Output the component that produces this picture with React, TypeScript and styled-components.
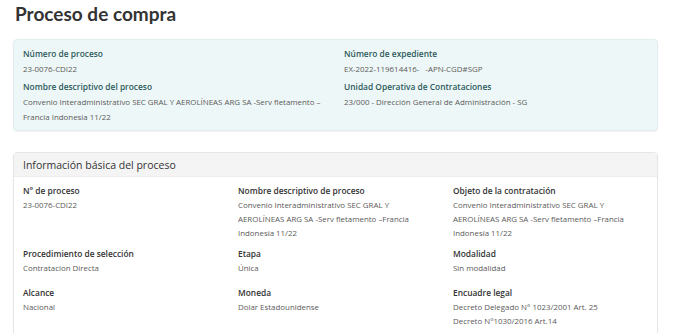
import styled, { createGlobalStyle } from "styled-components";

const GlobalStyle = createGlobalStyle`
  body {
    margin: 0;
    background: #ffffff;
    font-family: "Open Sans", "Liberation Sans", sans-serif;
    color: #555;
  }
`;

const Page = styled.div`
  padding: 0 22px 0 13px;
  height: 333px;
  overflow: hidden;
  box-sizing: border-box;
`;

const Title = styled.h1`
  margin: 0 0 11px 2px;
  font-family: Lato, "Open Sans", sans-serif;
  font-weight: 700;
  font-size: 19px;
  line-height: 28px;
  color: #333;
`;

const SummaryCard = styled.section`
  background: #eef7f7;
  border: 1px solid #e2eeee;
  border-radius: 4px;
  box-shadow: 0 1px 2px rgba(0, 0, 0, 0.06);
  padding: 6px 9px 5px 9px;
  display: grid;
  grid-template-columns: 1fr 1fr;
  column-gap: 17px;
  row-gap: 2px;
  margin-bottom: 21px;
`;

const Panel = styled.section`
  border: 1px solid #e6e6e6;
  border-radius: 4px;
  box-shadow: 0 1px 2px rgba(0, 0, 0, 0.05);
  overflow: hidden;
`;

const PanelHeader = styled.div`
  background: #f4f4f4;
  height: 23px;
  padding: 0 9px;
  display: flex;
  align-items: center;
  font-size: 10.5px;
  color: #333;
  border-bottom: 1px solid #ececec;
`;

const PanelBody = styled.div`
  padding: 6px 9px 10px;
  display: grid;
  grid-template-columns: repeat(3, 1fr);
  column-gap: 20px;
  row-gap: 6px;
`;

const Field = styled.div<{ $min?: number }>`
  min-height: ${(p) => p.$min ?? 0}px;
`;

const Label = styled.div<{ $teal?: boolean }>`
  font-weight: 600;
  font-size: 8.4px;
  line-height: ${(p) => (p.$teal ? 16 : 15)}px;
  color: ${(p) => (p.$teal ? "#2c5a5c" : "#333")};
`;

const Value = styled.div<{ $lh?: number }>`
  font-size: 7.9px;
  line-height: ${(p) => p.$lh ?? 14}px;
  color: #5a5a5a;
`;

const summary = [
  { label: "Número de proceso", value: ["23-0076-CDI22"] },
  { label: "Número de expediente", value: ["EX-2022-119614416-\u00a0\u00a0\u00a0-APN-CGD#SGP"] },
  {
    label: "Nombre descriptivo del proceso",
    value: [
      "Convenio Interadministrativo SEC GRAL Y AEROLÍNEAS ARG SA -Serv fletamento –",
      "Francia Indonesia 11/22",
    ],
  },
  {
    label: "Unidad Operativa de Contrataciones",
    value: ["23/000 - Dirección General de Administración - SG"],
  },
];

const basic = [
  { label: "N° de proceso", value: ["23-0076-CDI22"] },
  {
    label: "Nombre descriptivo de proceso",
    value: ["Convenio Interadministrativo SEC GRAL Y", "AEROLÍNEAS ARG SA -Serv fletamento –Francia", "Indonesia 11/22"],
  },
  {
    label: "Objeto de la contratación",
    value: ["Convenio Interadministrativo SEC GRAL Y", "AEROLÍNEAS ARG SA -Serv fletamento –Francia", "Indonesia 11/22"],
  },
  { label: "Procedimiento de selección", value: ["Contratacion Directa"] },
  { label: "Etapa", value: ["Única"] },
  { label: "Modalidad", value: ["Sin modalidad"] },
  { label: "Alcance", value: ["Nacional"] },
  { label: "Moneda", value: ["Dolar Estadounidense"] },
  {
    label: "Encuadre legal",
    value: ["Decreto Delegado N° 1023/2001 Art. 25", "Decreto N°1030/2016 Art.14"],
  },
];

export default function App() {
  return (
    <>
      <GlobalStyle />
      <Page>
        <Title>Proceso de compra</Title>
        <SummaryCard>
          {summary.map((f) => (
            <Field key={f.label}>
              <Label $teal>{f.label}</Label>
              {f.value.map((line) => (
                <Value key={line} $lh={15}>
                  {line}
                </Value>
              ))}
            </Field>
          ))}
        </SummaryCard>
        <Panel>
          <PanelHeader>Información básica del proceso</PanelHeader>
          <PanelBody>
            {basic.map((f) => (
              <Field key={f.label} $min={33}>
                <Label>{f.label}</Label>
                {f.value.map((line) => (
                  <Value key={line}>{line}</Value>
                ))}
              </Field>
            ))}
          </PanelBody>
        </Panel>
      </Page>
    </>
  );
}
